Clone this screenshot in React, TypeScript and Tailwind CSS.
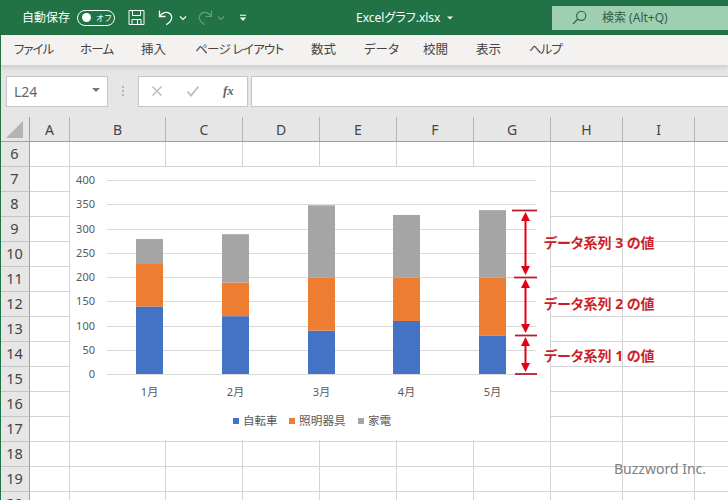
import React from 'react';

const GRID_COLS = 'grid grid-cols-[30px_40px_96px_77px_77px_77px_77px_77px_72px_72px_34px]';

const COLUMNS = ['A', 'B', 'C', 'D', 'E', 'F', 'G', 'H', 'I', ''];
const ROWS = [6, 7, 8, 9, 10, 11, 12, 13, 14, 15, 16, 17, 18, 19, 20];

const TABS = [
  { label: 'ファイル', cls: 'w-[66px] tracking-[-1px]' },
  { label: 'ホーム', cls: 'w-[61px] tracking-[-0.8px]' },
  { label: '挿入', cls: 'w-[54px]' },
  { label: 'ページ レイアウト', cls: 'w-[116px] tracking-[-0.7px]' },
  { label: '数式', cls: 'w-[53px]' },
  { label: 'データ', cls: 'w-[59px]' },
  { label: '校閲', cls: 'w-[53px]' },
  { label: '表示', cls: 'w-[53px]' },
  { label: 'ヘルプ', cls: 'w-[53px] tracking-[-1px]' },
];

// 自転車 / 照明器具 / 家電
const SERIES = [
  { month: '1月', x: 136, values: [140, 90, 50] },
  { month: '2月', x: 222, values: [120, 70, 100] },
  { month: '3月', x: 308, values: [90, 110, 150] },
  { month: '4月', x: 393, values: [110, 90, 130] },
  { month: '5月', x: 479, values: [80, 120, 140] },
];
const COLORS = ['#4472c4', '#ed7d31', '#a5a5a5'];
const TICKS = [0, 50, 100, 150, 200, 250, 300, 350, 400];

const BASE_Y = 374 - 117;
const UNIT = 0.485;
const BAR_UNIT = 0.482;

function TitleBar() {
  return (
    <div className="flex h-[35px] items-center bg-[#217346] text-white">
      <span className="ml-[22px] w-[48px] whitespace-nowrap text-[12px]">自動保存</span>
      <div className="ml-[7px] flex h-[16px] w-[38px] items-center rounded-full border border-white">
        <span className="ml-[4px] h-[9px] w-[9px] rounded-full bg-white" />
        <span className="ml-[5px] text-[8px] leading-none">オフ</span>
      </div>
      <svg className="ml-[13px]" width="17" height="17" viewBox="0 0 17 17" fill="none" stroke="white" strokeWidth="1">
        <path d="M1 1.5h15v14H1z" />
        <path d="M4.5 1.5v5h8v-5M4 15.5v-5h9v5M9.5 11v4" />
      </svg>
      <svg className="ml-[12px]" width="17" height="17" viewBox="0 0 17 17" fill="none" stroke="white" strokeWidth="1.3">
        <path d="M2.5 1.5v6h6" />
        <path d="M2.8 7.2C5 4.2 8 2.8 11 3.6c3.4 1 4.6 4.6 3 7.6-.9 1.8-2.6 3.4-4.8 4.6" />
      </svg>
      <svg className="ml-[5px]" width="8" height="6" viewBox="0 0 8 6" fill="none" stroke="white" strokeWidth="1.1">
        <path d="M1 1.5l3 3 3-3" />
      </svg>
      <svg className="ml-[10px] opacity-30" width="17" height="17" viewBox="0 0 17 17" fill="none" stroke="white" strokeWidth="1.2">
        <path d="M14.5 1.5v6h-6" />
        <path d="M14.2 7.2C12 4.2 9 2.8 6 3.6c-3.4 1-4.6 4.6-3 7.6.9 1.8 2.6 3.4 4.8 4.6" />
      </svg>
      <svg className="ml-[3px] opacity-30" width="8" height="6" viewBox="0 0 8 6" fill="none" stroke="white" strokeWidth="1.1">
        <path d="M1 1.5l3 3 3-3" />
      </svg>
      <svg className="ml-[14px]" width="8" height="8" viewBox="0 0 8 8" fill="white">
        <path d="M1 .8h6v1H1zM.8 3.5h6.4L4 7z" />
      </svg>
      <span className="ml-[109px] w-[86px] whitespace-nowrap text-[12px] [font-feature-settings:'palt']">Excelグラフ.xlsx</span>
      <svg className="ml-[5px]" width="6" height="4" viewBox="0 0 6 4" fill="white">
        <path d="M0 .5h6L3 3.5z" />
      </svg>
      <div className="ml-auto mt-[1px] flex h-[24px] w-[176px] items-center bg-[#9fcfb1] pb-[1px] text-[#2f5f45]">
        <svg className="ml-[20px]" width="15" height="15" viewBox="0 0 15 15" fill="none" stroke="#2f5f45" strokeWidth="1.1">
          <circle cx="9.2" cy="5.8" r="4.6" />
          <path d="M5.8 9L1 14" />
        </svg>
        <span className="ml-[15px] whitespace-nowrap text-[12px]">検索 (Alt+Q)</span>
      </div>
    </div>
  );
}

function TabBar() {
  return (
    <div className="relative z-10 flex h-[30px] items-center bg-[#f3f2f1] pl-[14px] text-[12.5px] text-[#444444] shadow-[0_2px_5px_rgba(0,0,0,0.14)] [font-feature-settings:'palt']">
      {TABS.map((tab) => (
        <span key={tab.label} className={`${tab.cls} whitespace-nowrap`}>
          {tab.label}
        </span>
      ))}
    </div>
  );
}

function FormulaBar() {
  return (
    <div className="flex h-[52px] items-start bg-[#e6e6e6] pl-[6px] pt-[11px]">
      <div className="flex h-[31px] w-[102px] items-center justify-between border border-[#c6c6c6] bg-white pl-[7px] pr-[7px] text-[14px] text-[#666666]">
        <span>L24</span>
        <span className="mb-[3px] h-0 w-0 border-x-[4px] border-t-[4px] border-x-transparent border-t-[#777777]" />
      </div>
      <div className="ml-[14px] mt-[10px] flex flex-col gap-[2px]">
        <span className="h-[2px] w-[2px] bg-[#b5b5b5]" />
        <span className="h-[2px] w-[2px] bg-[#b5b5b5]" />
        <span className="h-[2px] w-[2px] bg-[#b5b5b5]" />
      </div>
      <div className="ml-[14px] flex h-[31px] w-[110px] items-center border border-[#c6c6c6] bg-white pb-[2px]">
        <svg className="ml-[12px]" width="12" height="12" viewBox="0 0 12 12" fill="none" stroke="#bdbdbd" strokeWidth="1.5">
          <path d="M1.5 1.5l9 9M10.5 1.5l-9 9" />
        </svg>
        <svg className="ml-[23px]" width="14" height="12" viewBox="0 0 14 12" fill="none" stroke="#bdbdbd" strokeWidth="1.8">
          <path d="M1.5 6.5l3.5 4 7.5-9" />
        </svg>
        <span className="ml-[23px] font-['Liberation_Serif',serif] text-[13px] font-bold italic leading-none text-[#666666]">fx</span>
      </div>
      <div className="ml-[3px] h-[31px] flex-1 border-y border-l border-[#c6c6c6] bg-white" />
    </div>
  );
}

function SheetGrid() {
  return (
    <div>
      <div className={`${GRID_COLS} h-[25px] border-b border-[#a0a0a0] bg-[#e6e6e6] text-[14px] text-[#444444]`}>
        <div className="flex items-center justify-center border-r border-[#a0a0a0]">
          <span className="h-0 w-0 border-b-[17px] border-l-[17px] border-b-[#b4b4b4] border-l-transparent" />
        </div>
        {COLUMNS.map((col, i) => (
          <div key={i} className="flex items-center justify-center border-r border-[#b4b4b4]">
            {col}
          </div>
        ))}
      </div>
      {ROWS.map((row) => (
        <div key={row} className={`${GRID_COLS} h-[25px]`}>
          <div className="flex items-center justify-center border-b border-r border-b-[#c4c4c4] border-r-[#a0a0a0] bg-[#e6e6e6] text-[14.5px] text-[#444444]">
            {row}
          </div>
          {COLUMNS.map((col, i) => (
            <div key={i} className="border-b border-r border-[#d4d4d4] bg-white" />
          ))}
        </div>
      ))}
    </div>
  );
}

function Chart() {
  return (
    <svg className="absolute left-0 top-0" width="728" height="383" viewBox="0 0 728 383">
      <rect x="70" y="50" width="480" height="273" fill="white" />
      {TICKS.map((tick) => {
        const y = Math.round(BASE_Y - tick * UNIT);
        return (
          <g key={tick}>
            <line x1="107" x2="536" y1={y + 0.5} y2={y + 0.5} stroke="#d9d9d9" />
            <text x="95" y={y + 4} textAnchor="end" fontSize="11" fill="#595959">
              {tick}
            </text>
          </g>
        );
      })}
      {SERIES.map((s) => {
        let top = BASE_Y;
        return (
          <g key={s.month}>
            {s.values.map((value, i) => {
              const h = value * BAR_UNIT;
              top -= h;
              return <rect key={i} x={s.x} y={top} width="27" height={h} fill={COLORS[i]} />;
            })}
            <text x={s.x + 13.5} y="279" textAnchor="middle" fontSize="11" fill="#595959">
              {s.month}
            </text>
          </g>
        );
      })}
      <rect x="233" y="301" width="6" height="6" fill={COLORS[0]} />
      <text x="243" y="308" fontSize="11.5" fill="#595959">自転車</text>
      <rect x="289" y="301" width="6" height="6" fill={COLORS[1]} />
      <text x="299" y="308" fontSize="11.7" fill="#595959">照明器具</text>
      <rect x="358" y="301" width="6" height="6" fill={COLORS[2]} />
      <text x="368" y="308" fontSize="11.5" fill="#595959">家電</text>
    </svg>
  );
}

function Annotations() {
  const arrows = [
    { top: 93, bottom: 160, x1: 512 },
    { top: 160, bottom: 218, x1: 514 },
    { top: 218, bottom: 257, x1: 515 },
  ];
  return (
    <>
      <svg className="absolute left-0 top-0" width="728" height="383" viewBox="0 0 728 383">
        {arrows.map((a) => (
          <g key={a.top}>
            <line x1="525.5" x2="525.5" y1={a.top + 6} y2={a.bottom - 6} stroke="#e60012" strokeWidth="2" />
            <path d={`M525.5 ${a.top + 2}l-4.5 9h9z`} fill="#e60012" />
            <path d={`M525.5 ${a.bottom - 2}l-4.5 -9h9z`} fill="#e60012" />
            <line x1={a.x1} x2="537" y1={a.top + 0.5} y2={a.top + 0.5} stroke="#b3202c" strokeWidth="1.8" />
          </g>
        ))}
        <line x1="515" x2="537" y1="257" y2="257" stroke="#b3202c" strokeWidth="1.8" />
      </svg>
      <span className="absolute left-[544px] top-[115px] whitespace-nowrap text-[14px] font-bold text-[#cc1f2a] [font-feature-settings:'palt']">データ系列 3 の値</span>
      <span className="absolute left-[544px] top-[176px] whitespace-nowrap text-[14px] font-bold text-[#cc1f2a] [font-feature-settings:'palt']">データ系列 2 の値</span>
      <span className="absolute left-[544px] top-[228px] whitespace-nowrap text-[14px] font-bold text-[#cc1f2a] [font-feature-settings:'palt']">データ系列 1 の値</span>
    </>
  );
}

export default function App() {
  return (
    <div className="relative h-[500px] w-[728px] overflow-hidden bg-white font-['Noto_Sans','Noto_Sans_CJK_JP',sans-serif]">
      <TitleBar />
      <TabBar />
      <FormulaBar />
      <div className="relative">
        <SheetGrid />
        <Chart />
        <Annotations />
        <span className="absolute left-[614px] top-[341px] whitespace-nowrap text-[14px] text-[#808080]">Buzzword Inc.</span>
      </div>
      <div className="absolute bottom-0 left-0 top-[35px] z-20 w-px bg-[#217346]" />
    </div>
  );
}
